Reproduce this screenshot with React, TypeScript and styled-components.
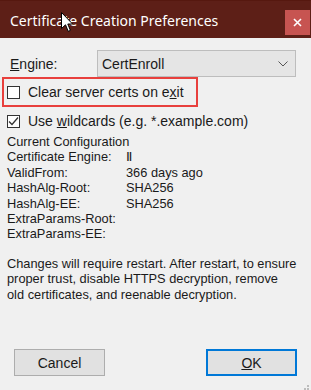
import React from "react";
import styled, { createGlobalStyle, css } from "styled-components";

const GlobalStyle = createGlobalStyle`
  html, body {
    margin: 0;
    padding: 0;
    overflow: hidden;
    background: #f0f0f0;
  }
`;

interface CheckProps {
  checked?: boolean;
  highlighted?: boolean;
}

const configRows: [string, string][] = [
  ["Certificate Engine:", "\u2161"],
  ["ValidFrom:", "366 days ago"],
  ["HashAlg-Root:", "SHA256"],
  ["HashAlg-EE:", "SHA256"],
  ["ExtraParams-Root:", ""],
  ["ExtraParams-EE:", ""],
];

export default function App() {
  return (
    <Window>
      <GlobalStyle />
      <TitleBar>
        <Title>Certificate Creation Preferences</Title>
        <CloseButton>
          <svg width="9" height="9" viewBox="0 0 9 9">
            <path d="M1 1 L8 8 M8 1 L1 8" stroke="#fff" strokeWidth="1.6" />
          </svg>
        </CloseButton>
      </TitleBar>
      <Content>
        <EngineRow>
          <Label>
            <u>E</u>ngine:
          </Label>
          <Select>
            <span>CertEnroll</span>
            <svg width="10" height="6" viewBox="0 0 10 6">
              <path d="M0.5 0.5 L5 5 L9.5 0.5" stroke="#555" fill="none" strokeWidth="1" />
            </svg>
          </Select>
        </EngineRow>
        <CheckRow highlighted>
          <Box />
          <CheckLabel>
            Clear server certs on e<u>x</u>it
          </CheckLabel>
        </CheckRow>
        <CheckRow>
          <Box checked>
            <svg width="11" height="11" viewBox="0 0 11 11">
              <path d="M1 5.5 L4 8.5 L10 1.5" stroke="#333" fill="none" strokeWidth="1.3" />
            </svg>
          </Box>
          <CheckLabel>
            Use <u>w</u>ildcards (e.g. *.example.com)
          </CheckLabel>
        </CheckRow>
        <Config>
          <ConfigTitle>Current Configuration</ConfigTitle>
          {configRows.map(([k, v]) => (
            <React.Fragment key={k}>
              <span>{k}</span>
              <span>{v}</span>
            </React.Fragment>
          ))}
        </Config>
        <Note>
          Changes will require restart. After restart, to ensure
          <br />
          proper trust, disable HTTPS decryption, remove
          <br />
          old certificates, and reenable decryption.
        </Note>
        <ButtonRow>
          <Button>Cancel</Button>
          <Button primary>
            <u>O</u>K
          </Button>
        </ButtonRow>
      </Content>
      <Grip>
        <svg width="10" height="10" viewBox="0 0 10 10" fill="#bcbcbc">
          <rect x="7" y="1" width="2" height="2" />
          <rect x="4" y="4" width="2" height="2" />
          <rect x="7" y="4" width="2" height="2" />
          <rect x="1" y="7" width="2" height="2" />
          <rect x="4" y="7" width="2" height="2" />
          <rect x="7" y="7" width="2" height="2" />
        </svg>
      </Grip>
      <Cursor>
        <svg width="13" height="21" viewBox="0 0 13 21">
          <path
            d="M0.5 0.5 L0.5 16.5 L4.5 12.8 L7.2 19.3 L9.4 18.4 L6.8 12 L11.6 12 Z"
            fill="#fff"
            stroke="#000"
            strokeWidth="1"
            strokeLinejoin="round"
          />
        </svg>
      </Cursor>
    </Window>
  );
}

const Window = styled.div`
  position: relative;
  width: 311px;
  height: 390px;
  background: #f0f0f0;
  display: flex;
  flex-direction: column;
  font-family: "Liberation Sans", Arial, sans-serif;
  color: #1a1a1a;
  overflow: hidden;
`;

const TitleBar = styled.div`
  height: 38px;
  flex-shrink: 0;
  background: #5d1f17;
  border-top: 1px solid #56180f;
  box-sizing: border-box;
  display: flex;
  justify-content: space-between;
  align-items: center;
  padding-left: 10px;
`;

const Title = styled.div`
  font-family: "Noto Sans", "Open Sans", sans-serif;
  font-size: 14px;
  color: #ffffff;
  margin-top: 1px;
`;

const CloseButton = styled.div`
  width: 25px;
  height: 25px;
  background: #c75451;
  display: flex;
  align-items: center;
  justify-content: center;
  align-self: flex-end;
  margin-bottom: 3px;
  margin-right: 1px;
`;

const Content = styled.div`
  flex: 1;
  display: flex;
  flex-direction: column;
  padding: 12px 14px 14px 7px;
`;

const EngineRow = styled.div`
  display: flex;
  align-items: center;
  height: 27px;
`;

const Label = styled.span`
  width: 87px;
  padding-left: 3px;
  font-size: 14px;
`;

const Select = styled.div`
  width: 199px;
  height: 27px;
  box-sizing: border-box;
  background: #e5e5e5;
  border: 1px solid #bdbdbd;
  display: flex;
  align-items: center;
  justify-content: space-between;
  padding: 0 7px 0 4px;
  font-size: 14px;
`;

const CheckRow = styled.div<CheckProps>`
  display: flex;
  align-items: center;
  gap: 8px;
  height: 28px;
  margin-left: -5px;
  padding-left: 5px;
  width: 186px;
  ${(p) =>
    p.highlighted &&
    css`
      height: 30px;
      box-sizing: border-box;
      border: 2px solid #e8403d;
      padding-left: 3px;
      width: 196px;
    `}
`;

const Box = styled.div<CheckProps>`
  width: 13px;
  height: 13px;
  box-sizing: border-box;
  border: 1px solid #333;
  background: #fff;
  display: flex;
  align-items: center;
  justify-content: center;
  flex-shrink: 0;
`;

const CheckLabel = styled.span`
  font-size: 14px;
  white-space: nowrap;
`;

const Config = styled.div`
  display: grid;
  grid-template-columns: 119px auto;
  font-size: 12.8px;
  line-height: 15.4px;
  margin-top: -1px;
`;

const ConfigTitle = styled.span`
  grid-column: 1 / span 2;
`;

const Note = styled.p`
  margin: 14px -10px 0 0;
  font-size: 12.8px;
  line-height: 15.5px;
  white-space: nowrap;
`;

const ButtonRow = styled.div`
  display: flex;
  justify-content: space-between;
  margin-top: auto;
  padding-left: 7px;
`;

const Button = styled.div<{ primary?: boolean }>`
  width: 91px;
  height: 27px;
  box-sizing: border-box;
  background: #e1e1e1;
  border: 1px solid #adadad;
  display: flex;
  align-items: center;
  justify-content: center;
  font-size: 14px;
  ${(p) =>
    p.primary &&
    css`
      border: 2px solid #0078d7;
    `}
`;

const Grip = styled.div`
  position: absolute;
  right: 1px;
  bottom: 0px;
  width: 10px;
  height: 10px;
`;

const Cursor = styled.div`
  position: absolute;
  left: 61px;
  top: 12px;
  width: 13px;
  height: 21px;
`;
